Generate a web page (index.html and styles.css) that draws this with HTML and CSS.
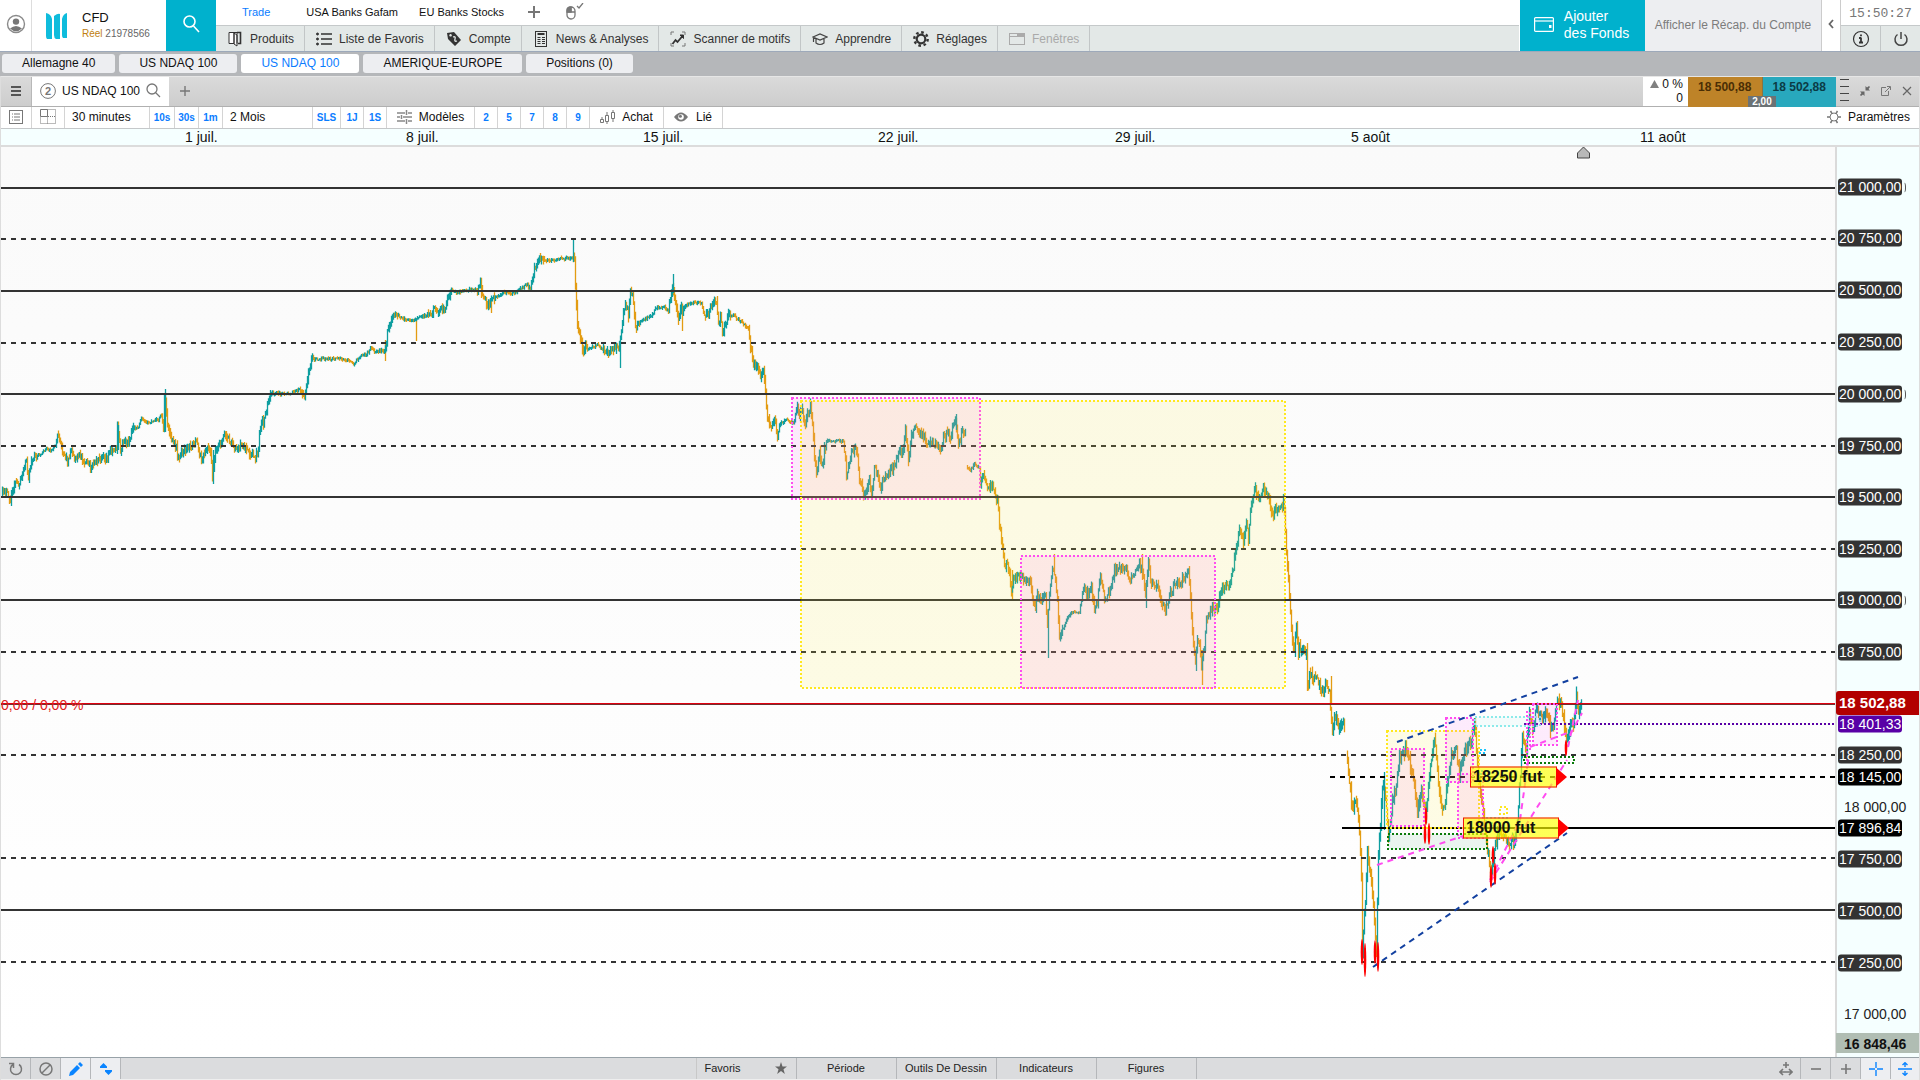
FILE: index.html
```html
<!DOCTYPE html>
<html lang="fr">
<head>
<meta charset="utf-8">
<title>US NDAQ 100</title>
<link rel="stylesheet" href="styles.css">
</head>
<body>
<header class="header">
  <button class="profile" aria-label="Profil"><svg width="20" height="20" viewBox="0 0 20 20"><circle cx="10" cy="10" r="8.5" fill="none" stroke="#8a8a8a" stroke-width="1.4"/><circle cx="10" cy="7.6" r="3.2" fill="#777"/><path d="M4 14.5Q10 9.500 16 14.500Q10 20 4 14.500Z" fill="#777"/></svg></button>
  <div class="brand">
    <svg width="22" height="26" viewBox="0 0 22 26" fill="#0fbcdc"><path d="M0 0q5 1 6 6v20h-5q-1-1-1-3zM8 3q4-3 6-2v25h-4q-2-1-2-4zM16 6q1-5 5-6v25h-4q-1-1-1-3z"/></svg>
    <div><div class="brand-name">CFD</div><div class="account"><span class="gold">Réel</span> 21978566</div></div>
  </div>
  <button class="search" aria-label="Rechercher"><svg width="20" height="20" viewBox="0 0 20 20" fill="none" stroke="#fff" stroke-width="1.600"><circle cx="8.500" cy="7.500" r="5.500"/><path d="M12.500 12L18 18"/></svg></button>
  <div class="nav">
    <nav class="layouts">
      <a href="#" class="on">Trade</a><a href="#">USA Banks Gafam</a><a href="#">EU Banks Stocks</a>
      <button aria-label="Ajouter"><svg width="14" height="14" viewBox="0 0 14 14" stroke="#777" stroke-width="2"><path d="M7 1v12M1 7h12"/></svg></button>
      <button aria-label="Souris"><svg width="18" height="18" viewBox="0 0 18 18" fill="none" stroke="#777" stroke-width="1.300"><rect x="1" y="4" width="8" height="12" rx="4"/><path d="M5 4v5M1 9h8M11 3l2 2 4-5"/><path d="M1 9V7q0-3 4-3v5z" fill="#777"/></svg></button>
    </nav>
    <nav class="menu">
      <button><svg viewBox="0 0 16 16" fill="none" stroke="#333"><path d="M2 1.500h5v11H2zM7 1.500h3v11M7 2l3 2v11l-3-2z" fill="#fff"/><path d="M10 1.500h3.500v11H11" stroke-width="1.600"/></svg>Produits</button>
      <button><svg viewBox="0 0 16 16" fill="#333" stroke="#333"><path d="M5 3h11M5 8h11M5 13h11" stroke-width="1.500"/><circle cx="1.500" cy="3" r="1"/><circle cx="1.500" cy="8" r="1"/><circle cx="1.500" cy="13" r="1"/></svg>Liste de Favoris</button>
      <button><svg viewBox="0 0 16 16" fill="#333"><path fill-rule="evenodd" d="M1 2l7-1 7 8-6 6-7-7zM4.500 3a1.300 1.300 0 1 0 .1 0z"/><path d="M7 6q3-1 2 2t2 2" stroke="#e3e8e7" fill="none" stroke-width="1.300"/></svg>Compte</button>
      <button><svg viewBox="0 0 16 16" fill="none" stroke="#333"><rect x="2.500" y=".5" width="11" height="15"/><path d="M4.500 3h7" stroke-width="2"/><path d="M4.500 6.500h3M4.500 8.500h3M4.500 10.500h3M4.500 12.500h3M9 6.500h3M9 8.500h3M9 10.500h3M9 12.500h3"/></svg>News &amp; Analyses</button>
      <button><svg viewBox="0 0 16 16" fill="none" stroke="#333"><path d="M1 4V1h3M12 1h3v3M15 12v3h-3M4 15H1v-3" stroke="#777"/><path d="M2.500 13l3-4 2 2 5-6" stroke-width="1.800"/><path d="M10 4h3.500v3.500z" fill="#333"/></svg>Scanner de motifs</button>
      <button><svg viewBox="0 0 16 16" fill="none" stroke="#444" stroke-width="1.200"><path d="M1 6l7-3 7 3-7 3zM4 8v4q4 3 8 0V8M1.500 6v5"/></svg>Apprendre</button>
      <button><svg viewBox="0 0 16 16" fill="none" stroke="#333"><circle cx="8" cy="8" r="4.300" stroke-width="2.200"/><circle cx="8" cy="8" r="6.700" stroke-width="2.400" stroke-dasharray="2.600 2.660"/></svg>Réglages</button>
      <button class="off" disabled><svg viewBox="0 0 16 16" fill="none" stroke="#aaa"><rect x=".5" y="2.500" width="15" height="11"/><path d="M1 5.500h14"/><path d="M8 4h7" stroke-width="2"/></svg>Fenêtres</button>
    </nav>
  </div>
  <button class="funds"><svg width="20" height="15" viewBox="0 0 20 15" fill="none" stroke="#fff" stroke-width="1.200"><rect x=".6" y=".6" width="18.800" height="13.800" rx="1"/><path d="M1 4h18"/><path d="M15 9.500h2.500" stroke-width="3"/></svg><span>Ajouter<br>des Fonds</span></button>
  <button class="recap">Afficher le Récap. du Compte</button>
  <button class="fold" aria-label="Replier"><svg width="6" height="10" viewBox="0 0 6 10" fill="none" stroke="#666" stroke-width="1.800"><path d="M5 1L1.500 5 5 9"/></svg></button>
  <div class="system">
    <time>15:50:27</time>
    <div class="system-row">
      <button aria-label="Informations"><svg width="18" height="18" viewBox="0 0 18 18" fill="none" stroke="#333"><circle cx="9" cy="9" r="7.500" stroke-width="1.200"/><path d="M9 7.500v5M7 8h2M7 12.500h4M9 4.500v1.800" stroke-width="1.800"/></svg></button>
      <button aria-label="Quitter"><svg width="16" height="16" viewBox="0 0 16 16" fill="none" stroke="#444" stroke-width="1.500"><path d="M4.500 3.500A6 6 0 1 0 11.500 3.500M8 1v7"/></svg></button>
    </div>
  </div>
</header>
<nav class="desks">
  <button>Allemagne 40</button><button>US NDAQ 100</button><button class="on">US NDAQ 100</button><button>AMERIQUE-EUROPE</button><button>Positions (0)</button>
</nav>
<main class="window">
  <div class="titlebar">
    <button class="burger" aria-label="Menu"><svg width="10" height="12" viewBox="0 0 10 12" stroke="#555" stroke-width="2"><path d="M0 2h10M0 6h10M0 10h10"/></svg></button>
    <div class="doc"><svg width="16" height="16" viewBox="0 0 16 16"><circle cx="8" cy="8" r="7.400" fill="none" stroke="#777"/><text x="8" y="12" text-anchor="middle" class="doc-number">2</text></svg><span>US NDAQ 100</span><svg width="15" height="15" viewBox="0 0 15 15" fill="none" stroke="#777" stroke-width="1.300"><circle cx="6" cy="6" r="5"/><path d="M9.500 9.500L14 14"/></svg></div>
    <button class="newtab" aria-label="Nouvel onglet"><svg width="10" height="10" viewBox="0 0 10 10" stroke="#777" stroke-width="1.400"><path d="M5 0v10M0 5h10"/></svg></button>
    <div class="change"><div><svg width="9" height="8" viewBox="0 0 9 8"><path d="M4.500 0L9 8H0z" fill="#808080"/></svg> 0 %</div><div>0</div></div>
    <div class="quotes"><button class="sell">18 500,88</button><button class="buy">18 502,88</button><span class="spread">2,00</span></div>
    <div class="wintools">
      <svg width="9" height="25" viewBox="0 0 9 25" stroke="#444"><path d="M0 1.500h9M0 8.500h9M0 15.500h9M0 22.500h9"/></svg>
      <button aria-label="Réduire"><svg width="10" height="10" viewBox="0 0 10 10" fill="#666"><path d="M0 5.500h4.500V10L3 8.500 1 10 0 9l1.500-2zM10 4.500H5.500V0L7 1.500 9 0l1 1-1.500 2z"/></svg></button>
      <button aria-label="Détacher"><svg width="10" height="10" viewBox="0 0 10 10" fill="none" stroke="#777"><path d="M5 1.500H.5v8h7V5M4 6l5-5M6 .5h3.500V4"/></svg></button>
      <button aria-label="Fermer"><svg width="10" height="10" viewBox="0 0 10 10" stroke="#666" stroke-width="1.200"><path d="M1 1l8 8M9 1L1 9"/></svg></button>
    </div>
  </div>
  <div class="toolbar">
    <button class="c31" aria-label="Liste"><svg width="14" height="14" viewBox="0 0 14 14" fill="none" stroke="#777"><rect x=".5" y=".5" width="13" height="13"/><path d="M3 4h1M5 4h6M3 7h1M5 7h6M3 10h1M5 10h6"/></svg></button>
    <button class="c33" aria-label="Grille"><svg width="16" height="15" viewBox="0 0 16 15" fill="none" stroke="#777"><path d="M.5.5h7v7h-7z"/><path d="M7.500.5h8v14H.5v-7M7.500 7.500v7M8 7.500h8" stroke-dasharray="1 1"/></svg></button>
    <button class="c85">30 minutes</button>
    <button class="c25 q">10s</button><button class="c24 q">30s</button><button class="c24 q">1m</button>
    <button class="c90">2 Mois</button>
    <button class="c28 q">SLS</button><button class="c23 q">1J</button><button class="c23 q">1S</button>
    <button class="c88"><svg width="15" height="14" viewBox="0 0 15 14" stroke="#888" stroke-width="1.500"><path d="M0 3h8M11 3h4M0 7h3M6 7h9M0 11h8M11 11h4M9.500 0v5M4.500 5v4M9.500 9v5"/></svg>Modèles</button>
    <button class="c23 q">2</button><button class="c23 q">5</button><button class="c23 q">7</button><button class="c23 q">8</button><button class="c23 q">9</button>
    <button class="c74"><svg width="15" height="14" viewBox="0 0 15 14" fill="none" stroke="#777"><path d="M.5 9.500h3v3h-3zM5.500 5.500h3v6h-3zM11.500 2.500h3v6h-3zM2 7v2M7 2v3M7 12v2M13 0v2M13 9v3"/></svg>Achat</button>
    <button class="c59"><svg width="14" height="10" viewBox="0 0 14 10"><path d="M0 5q7-9 14 0-7 9-14 0z" fill="#777"/><circle cx="7" cy="5" r="2.800" fill="#fff"/><circle cx="6.400" cy="4.200" r="1.500" fill="#777"/></svg>Lié</button>
    <button class="params"><svg width="14" height="14" viewBox="0 0 14 14" fill="none" stroke="#777"><circle cx="7" cy="7" r="4"/><path d="M0 7h3M11 7h3M3.500 1l1.500 2.500M10.500 1L9 3.500M3.500 13L5 10.500M10.500 13L9 10.500" stroke-width="1.500"/></svg>Paramètres</button>
  </div>
  <div class="dates" id="dates"></div>
  <div class="chart">
    <div class="plot" id="plot">
      <svg class="canvas" id="canvas" viewBox="1 147 1834 908" preserveAspectRatio="none"></svg>
      <span class="pnl" id="pnl">0,00 / 0,00 %</span>
    </div>
    <div class="axis" id="axis"></div>
  </div>
  <footer class="footer">
    <div class="group">
      <button aria-label="Actualiser"><svg width="14" height="14" viewBox="0 0 14 14" fill="none" stroke="#777" stroke-width="1.500"><path d="M4 2.500a5.500 5.500 0 1 0 6 0M0 1.500h4.500V6"/></svg></button>
      <button aria-label="Effacer"><svg width="14" height="14" viewBox="0 0 14 14" fill="none" stroke="#777" stroke-width="1.500"><circle cx="7" cy="7" r="6"/><path d="M3 11l8-8"/></svg></button>
      <button class="lit" aria-label="Dessiner"><svg width="14" height="14" viewBox="0 0 14 14" fill="#0a84ff"><path d="M0 14l1-4 7-7 3 3-7 7zM9 2l2-2 3 3-2 2z"/></svg></button>
      <button class="lit" aria-label="Trier"><svg width="12" height="12" viewBox="0 0 12 12" fill="#0a84ff"><path d="M3.500 0l3.500 3.500v1.500H0V3.500zM8.500 12L5 8.500V7h7v1.500z"/></svg></button>
    </div>
    <div class="group tabs">
      <button class="fav">Favoris<svg width="12" height="12" viewBox="0 0 12 12"><path d="M6 0l1.500 4.500H12L8.500 7.200 9.800 12 6 9 2.200 12l1.300-4.800L0 4.500h4.500z" fill="#666"/></svg></button><button>Période</button><button>Outils De Dessin</button><button>Indicateurs</button><button>Figures</button>
    </div>
    <div class="group right">
      <button aria-label="Ajuster"><svg width="14" height="14" viewBox="0 0 14 14" fill="none" stroke="#777" stroke-width="1.600"><path d="M7 0v6M4 3h6M1 10h12M4 7l-3 3 3 3M10 7l3 3-3 3"/></svg></button>
      <button aria-label="Zoom arrière"><svg width="10" height="10" viewBox="0 0 10 10" stroke="#777" stroke-width="1.600"><path d="M0 5h10"/></svg></button>
      <button aria-label="Zoom avant"><svg width="10" height="10" viewBox="0 0 10 10" stroke="#777" stroke-width="1.600"><path d="M0 5h10M5 0v10"/></svg></button>
      <button class="lit" aria-label="Réticule"><svg width="14" height="14" viewBox="0 0 14 14" stroke="#0a84ff" stroke-width="1.400"><path d="M0 7h6M8 7h6M7 0v6M7 8v6"/></svg></button>
      <button class="lit" aria-label="Axe"><svg width="14" height="14" viewBox="0 0 14 14" fill="none" stroke="#0a84ff" stroke-width="1.400"><path d="M0 7h14M7 0v5M7 9v5M4.500 3L7 .7 9.500 3M4.500 11L7 13.300 9.500 11"/></svg></button>
    </div>
  </footer>
</main>
<script src="chart.js"></script>
</body>
</html>
```
FILE: styles.css
```css
* { box-sizing: border-box; }
body { margin: 0; min-height: 100vh; display: flex; flex-direction: column; background: #fff; font: 12px/14px "Liberation Sans", Arial, sans-serif; color: #111; }
button { font: inherit; color: inherit; border: 0; background: none; padding: 0; margin: 0; display: flex; align-items: center; justify-content: center; white-space: nowrap; }
a { color: inherit; text-decoration: none; }
svg { flex: none; }

.header { height: 52px; display: flex; border-bottom: 1px solid #9da9ba; background: #fff; flex: none; }
.profile { width: 32px; border-right: 1px solid #ddd; padding-bottom: 4px; }
.brand { width: 134px; display: flex; gap: 14px; padding-left: 14px; align-items: center; }
.brand-name { font-size: 13px; line-height: 16px; }
.account { font-size: 10px; line-height: 16px; color: #666; white-space: nowrap; }
.gold { color: #c08010; }
.search { width: 50px; background: #00b1cd; padding-bottom: 4px; }
.nav { flex: 1; display: flex; flex-direction: column; }
.layouts { height: 25px; display: flex; align-items: center; padding: 0 0 2px 26px; font-size: 11px; }
.layouts a { margin-right: 21px; }
.layouts .on { color: #0a7cff; margin-right: 36px; }
.layouts button { margin: 0 23px 0 2px; }
.menu { flex: 1; display: flex; background: #e3e8e7; border-top: 1px solid #c5c9ca; color: #333; }
.menu button { gap: 7px; padding: 0 10px 0 11px; border-right: 1px solid #c2c6c7; }
.menu svg { width: 16px; height: 16px; }
.menu .off { color: #aaa; }
.funds { width: 126px; gap: 10px; padding: 0 2px 2px 0; background: #00b1cd; color: #fff; font-size: 14px; line-height: 17px; text-align: left; border-left: 1px solid #fff; }
.recap { width: 177px; background: #edeef1; color: #7c7c7c; border-right: 1px solid #ccc; padding-bottom: 1px; }
.fold { width: 19px; border-right: 1px solid #ccc; padding-bottom: 4px; }
.system { width: 79px; display: flex; flex-direction: column; }
.system time { height: 25px; font: 13px/27px "Liberation Mono", monospace; color: #777; text-align: center; }
.system-row { flex: 1; display: flex; border-top: 1px solid #c5c9ca; background: #e3e8e7; }
.system-row button { flex: 1; }
.system-row button + button { border-left: 1px solid #c2c6c7; }

.desks { height: 24px; flex: none; display: flex; gap: 4px; padding: 2px 2px 3px; background: #b5b7ba; }
.desks button { padding: 0 20px 2px; border-radius: 3px; background: #edeef1; }
.desks .on { background: #fff; color: #0a7cff; }

.window { flex: 1; display: flex; flex-direction: column; border-left: 1px solid #ddd; border-right: 1px solid #ddd; }
.titlebar { height: 31px; flex: none; display: flex; border-top: 1px solid #e6e6e6; border-bottom: 1px solid #b0b0b0; background: linear-gradient(#dadada, #cdcdcd); }
.burger { width: 31px; padding-bottom: 2px; border-right: 1px solid #b8b8b8; }
.doc { width: 137px; display: flex; align-items: center; gap: 6px; padding: 0 0 2px 8px; background: #fff; white-space: nowrap; }
.doc-number { font: bold 11px "Liberation Sans", sans-serif; fill: #777; }
.newtab { width: 32px; margin-right: auto; padding-bottom: 2px; }
.change { width: 45px; padding: 0 5px 0 0; background: #fff; text-align: right; }
.quotes { width: 148px; display: flex; position: relative; font-weight: bold; margin-bottom: -1px; }
.quotes button { flex: 1; padding-bottom: 11px; }
.sell { background: #be8328; color: #4a2e05; }
.buy { background: #28a8bd; color: #0b3b45; border-left: 1px solid #8a7340; }
.spread { position: absolute; left: 60px; bottom: 0; width: 28px; height: 11px; background: #6b7275; color: #fff; font-size: 10px; line-height: 11px; text-align: center; }
.wintools { width: 83px; display: flex; align-items: center; justify-content: space-between; padding: 0 7px 2px 4px; }

.toolbar { height: 22px; flex: none; display: flex; border-bottom: 1px solid #c5c8ca; background: #fff; }
.toolbar button { border-right: 1px solid #d4d4d4; padding-bottom: 2px; }
.toolbar .q { font-size: 10px; font-weight: bold; color: #0a7cff; padding-bottom: 0; }
.c23 { width: 23px; } .c24 { width: 24px; } .c25 { width: 25px; } .c28 { width: 28px; } .c31 { width: 31px; } .c33 { width: 33px; }
.c59 { width: 59px; gap: 8px; } .c74 { width: 74px; gap: 7px; } .c88 { width: 88px; gap: 7px; }
.toolbar .c85, .toolbar .c90 { justify-content: flex-start; padding-left: 7px; }
.c85 { width: 85px; } .c90 { width: 90px; }
.toolbar .params { margin-left: auto; border: 0; gap: 7px; padding-right: 9px; }

.dates { height: 18px; flex: none; position: relative; border-bottom: 2px solid #dcdcdc; background: #f5ffff; font-size: 14px; line-height: 17px; }
.dates span { position: absolute; white-space: nowrap; }
.chart { flex: 1; display: flex; min-height: 400px; }
.plot { flex: 1; position: relative; margin-bottom: 2px; background: linear-gradient(#fafafa, #fff); }
.canvas { position: absolute; inset: 0; width: 100%; height: 100%; }
.pnl { position: absolute; left: 0; transform: translateY(-50%); font-size: 14px; color: #e02020; }
.tag { position: absolute; display: flex; align-items: center; height: 21px; padding-left: 2px; transform: translateY(-50%); border: 1px solid #e11; background: rgba(255, 255, 0, .66); font-size: 16px; font-weight: bold; }
.tag svg { position: absolute; left: 100%; top: 0; }
.axis { width: 84px; position: relative; border-left: 2px solid #dadada; background: #f5ffff; font-size: 14px; }
.axis span { position: absolute; transform: translateY(-50%); white-space: nowrap; }
.axis .plain { left: 7px; color: #222; }
.axis .level { left: 1px; height: 17px; line-height: 17px; padding: 0 1px; border-radius: 3px; background: #333; color: #fff; }
.axis .thousand::after { content: ""; position: absolute; left: 100%; top: 4px; width: 3px; height: 10px; border-right: 1px solid #555; border-radius: 50%; }
.axis .drawn { background: #000; }
.axis .violet { background: #5800a6; }
.axis .last { left: -1px; right: 0; height: 24px; padding-left: 3px; border-radius: 3px 0 0 3px; background: #b20000; color: #fff; font-size: 15px; font-weight: bold; line-height: 24px; }
.axis .floor { left: -1px; right: 0; height: 20px; padding-left: 8px; background: #b0bdb3; font-weight: bold; line-height: 22px; }

.footer { height: 23px; flex: none; display: grid; grid-template-columns: 1fr auto 1fr; border-top: 1px solid #98a2a8; border-bottom: 1px solid #eee; background: #dbdcde; font-size: 11px; color: #222; }
.group { display: flex; }
.group button { width: 30px; border-right: 1px solid #b5b7ba; }
.group .lit { background: #edeef1; }
.group.right { justify-content: flex-end; }
.right button:last-child { width: 28px; border: 0; }
.tabs { margin-right: 28px; border-left: 1px solid #c8c8c8; }
.group.tabs button { width: 100px; padding-bottom: 2px; }
.group.tabs .fav { justify-content: space-between; padding: 0 9px 2px 8px; }
```
FILE: chart.js
```js
const X0 = 1, W = 1834, Y0 = 147, H = 908, END = 1836;
const NS = 'http://www.w3.org/2000/svg';
const canvas = document.getElementById('canvas');

function el(name, attrs) {
  const e = document.createElementNS(NS, name);
  for (const k in attrs) e.setAttribute(k, attrs[k]);
  canvas.appendChild(e);
}
function line(x1, y1, x2, y2, color, width, dash) {
  el('path', { d: `M${x1} ${y1}L${x2} ${y2}`, stroke: color, 'stroke-width': width, 'stroke-dasharray': dash || 'none' });
}
function box(x1, y1, x2, y2, color, fill) {
  el('rect', { x: x1, y: y1, width: x2 - x1, height: y2 - y1, stroke: color, 'stroke-width': 2, 'stroke-dasharray': '2 2', fill: fill || 'none' });
}
function label(parent, cls, text, x, y) {
  const s = document.createElement('span');
  s.className = cls;
  s.textContent = text;
  if (x !== null) s.style.left = ((x - X0) / W * 100) + '%';
  s.style.top = ((y - Y0) / H * 100) + '%';
  parent.appendChild(s);
  return s;
}

// Price track: x, y pairs; "|" starts a new session after a gap
const track = `2,492 5,489 11,501 15,483 20,486 27,460 29,477 33,457 37,456 42,454 47,448 51,451 56,445 58,436 62,447 68,461 72,450 75,458 82,455 84,460 91,467 98,460 104,455 107,458 112,450 117,448 118,428 121,450 124,440 128,443 133,430 139,427 142,417 148,423 153,422 159,419 162,415 164,432 165,393 168,423 171,438 177,447 178,457 182,454 188,447 197,442 202,460 208,448 211,450 213,477 216,450 219,442 222,443 224,434 232,443 237,450 243,443 248,453 256,457 259,448 260,430 263,418 264,427 268,403 271,393 286,394 295,392 300,389 305,397 307,387 310,368 312,358 315,359 345,359 354,364 361,357 369,353 371,348 375,352 382,350 385,353 388,333 392,317 395,316 398,314 402,319 415,320 426,315 433,312 437,310 441,308 445,310 447,302 452,290 457,292 465,291 473,289 477,291 481,285 484,298 489,306 494,298 504,293 514,293 522,288 528,284 531,290 535,267 541,258 549,261 557,259 573,258 575,260 576,290 578,323 581,340 584,353 586,343 589,348 598,345 606,353 612,350 620,347 622,330 624,310 626,302 629,315 631,293 633,293 636,327 638,325 642,320 651,317 657,308 665,307 669,312 672,293 673,285 676,302 679,318 682,308 687,305 695,302 702,304 706,318 711,308 717,302 719,323 721,318 723,333 726,327 730,313 736,317 742,322 749,329 751,347 754,367 758,363 761,377 764,373 766,390 767,410 771,427 775,423 778,433 781,423 787,420 792,423 795,422 798,403 800,417 802,408 806,423 811,405 813,420 815,457 817,475 820,453 823,467 825,448 828,441 844,441 847,473 853,452 857,447 860,477 864,493 867,492 870,483 872,493 875,467 881,485 887,475 893,470 900,453 904,448 906,430 908,447 909,463 912,437 915,427 922,433 928,442 936,443 941,452 944,437 949,432 951,443 953,427 956,417 959,443 963,433 966,435 | 967,467 971,470 975,464 980,468 981,483 984,478 989,488 993,486 997,500 999,507 1000,527 1003,547 1006,567 1008,560 1012,590 1015,577 1021,575 1024,582 1031,580 1033,597 1036,607 1038,595 1042,602 1046,593 1048,627 1050,593 1053,567 1056,580 1058,600 1060,640 1063,630 1067,620 1071,613 1076,612 1080,612 1084,588 1089,593 1092,587 1095,613 1098,603 1101,573 1105,600 1110,593 1115,570 1127,568 1130,582 1135,573 1140,563 1143,573 1146,593 1149,563 1152,583 1158,587 1162,602 1166,608 1171,593 1176,583 1181,582 1189,572 1191,597 1193,633 1196,663 1198,637 1200,640 1202,670 1205,643 1207,620 1213,610 1218,608 1221,590 1226,587 1231,582 1234,567 1237,547 1240,532 1244,543 1247,520 1249,540 1251,510 1256,490 1260,498 1264,488 1269,497 1273,517 1278,507 1282,507 1284,503 1286,530 1289,580 1292,633 1295,647 1297,623 1299,650 1303,647 1307,653 1308,683 1312,672 1315,678 1320,683 1323,692 1327,683 1330,693 1333,733 1335,720 1337,713 1339,732 1343,720 1345,723 | 1347,757 1350,783 1353,807 1357,803 1360,830 1362,880 1363,950 1366,903 1368,853 1372,880 1374,907 1377,950 1379,853 1382,807 1384,780 1386,797 1389,840 1393,800 1397,783 1400,757 1406,750 1412,767 1415,787 1418,813 1422,787 1426,817 1428,800 1431,767 1435,737 1438,770 1442,810 1445,807 1448,780 1452,753 1457,750 1460,773 1465,753 1472,740 1475,720 1478,763 1481,793 1484,813 1488,850 1492,870 1497,840 1500,827 1505,837 1510,845 1515,840 1518,820 1521,773 1523,740 1527,750 1530,717 1533,730 1537,710 1542,718 1547,708 1551,730 1555,720 1558,698 1563,712 1567,740 1572,717 1574,727 1577,697 1579,710 1582,702`;

// Calm overnight stretches have short candles: from, to
const calm = [[271, 300], [313, 383], [398, 427], [452, 476], [495, 527], [545, 572], [588, 602], [640, 668], [684, 704], [731, 748], [780, 796], [828, 844], [37, 55], [135, 160], [967, 980], [1063, 1082]];
// Long wicks: x, top, bottom, direction
const wicks = [[11, 490, 506, 1], [165, 389, 432, 1], [118, 425, 450, 1], [213, 450, 484, 1], [416, 318, 341, 0], [385, 340, 361, 0], [573, 239, 262, 1], [491, 298, 313, 0], [481, 282, 298, 0], [620, 341, 368, 1], [673, 274, 293, 1], [682, 305, 331, 0], [717, 296, 315, 0], [1048, 617, 658, 1], [1054, 554, 575, 0], [1202, 650, 685, 0], [1196, 650, 671, 1], [1142, 554, 580, 0], [1146, 580, 608, 1], [1307, 650, 691, 0], [1331, 676, 705, 0], [1012, 570, 599, 0], [956, 414, 430, 1], [1384, 772, 830, 1], [1550, 715, 738, 0]];

let seed = 17;
const rnd = () => (seed = (seed * 16807) % 2147483647) / 2147483647;
const paths = ['', ''];
for (const session of track.split('|')) {
  const pts = session.trim().split(/\s+/).map(p => p.split(',').map(Number));
  let prev = pts[0][1];
  for (let i = 0; i < pts.length - 1; i++) {
    const [xa, ya] = pts[i], [xb, yb] = pts[i + 1];
    for (let x = xa; x < xb; x++) {
      const quiet = calm.some(c => x >= c[0] && x <= c[1]);
      const amp = quiet ? 2.4 : x < 560 ? 6 : x > 1280 ? 9 : 7;
      const y = ya + (yb - ya) * (x + 1 - xa) / (xb - xa) + (rnd() - .5) * amp;
      const top = Math.min(prev, y) - .5 - rnd() * amp * .7;
      const bottom = Math.max(prev, y) + .5 + rnd() * amp * .7;
      paths[y < prev ? 1 : 0] += `M${x + .5} ${top.toFixed(1)}V${bottom.toFixed(1)}`;
      prev = y;
    }
  }
}
for (const [x, a, b, up] of wicks) paths[up] += `M${x + .5} ${a}V${b}`;

// Candles, then horizontal levels
const solid = [188, 291, 394, 497, 600, 910], dashed = [239, 343, 446, 549, 652, 755, 858, 962];
el('path', { d: paths[0], stroke: '#e39c12', 'stroke-width': 1.3 });
el('path', { d: paths[1], stroke: '#0e9ea0', 'stroke-width': 1.3 });
for (const y of solid) line(0, y, END, y, '#333', 2);
for (const y of dashed) line(1, y, END, y, '#333', 2, '5 5');
line(0, 703.5, END, 703.5, '#e00010', 1);
line(0, 704.5, END, 704.5, '#703030', 1);
line(1330, 777, END, 777, '#000', 2, '5 5');
line(1342, 828, 1384, 828, '#000', 2);
line(1384, 828, 1463, 828, '#000', 2, '2 2');
line(1463, 828, END, 828, '#000', 2);
line(1524, 724, END, 724, '#5800a6', 2, '2 2');

// Range boxes
const pink = '#ff4cf0', pinkFill = 'rgba(255,60,240,.09)', yellow = '#ffe81f', yellowFill = 'rgba(255,238,60,.13)';
box(792, 398, 980, 499, pink, pinkFill);
box(801, 401, 1285, 688, yellow, yellowFill);
box(1021, 556, 1215, 688, pink, pinkFill);
box(1387, 731, 1479, 828, yellow, yellowFill);
box(1391, 749, 1424, 826, pink, pinkFill);
box(1446, 718, 1473, 782, pink, pinkFill);
box(1458, 774, 1483, 838, pink, pinkFill);
box(1388, 834, 1487, 849, '#0a7a0a', 'rgba(0,128,60,.08)');
box(1475, 717, 1540, 726, '#8ceaea', 'rgba(140,234,234,.08)');
box(1533, 704, 1557, 745, pink, pinkFill);
line(1527, 711, 1527, 772, pink, 2, '2 2');
line(1530, 712, 1530, 750, pink, 2, '2 2');
box(1524, 757, 1574, 763, '#0a7a0a');
box(1480, 750, 1485, 753, '#19c5ff');
box(1481, 771, 1486, 774, '#19c5ff');
box(1500, 807, 1507, 814, yellow);
box(1486, 818, 1507, 823, '#5fe0ee');

// Trend lines
line(1397, 742, 1578, 677, '#1240a0', 2, '6 5');
line(1373, 967, 1567, 833, '#1240a0', 2, '6 5');
line(1377, 865, 1463, 836, pink, 2, '6 5');
line(1490, 882, 1567, 760, pink, 2, '6 5');
line(1490, 880, 1520, 820, pink, 2, '6 5');
line(1520, 820, 1529, 755, pink, 2, '6 5');
line(1530, 747, 1567, 733, pink, 2, '6 5');
line(1568, 747, 1578, 700, pink, 2, '6 5');
line(1570, 735, 1582, 713, pink, 2, '6 5');

// Alert marks on the lows
for (const [x, y, r] of [[1362, 952, 13], [1365, 960, 17], [1375, 952, 12], [1378, 957, 15], [1426, 816, 9], [1425, 834, 10], [1429, 834, 11], [1493, 855, 9], [1491, 877, 11], [1495, 874, 11], [1566, 748, 8]])
  el('ellipse', { cx: x, cy: y, rx: 1.3, ry: r, fill: '#f00' });

el('path', { d: 'M1583.5 147l6 6v5h-12v-5z', fill: '#b8b8b8', stroke: '#444' });

const plot = document.getElementById('plot');
for (const [text, x, y, w] of [['18250 fut', 1470, 776.5, 87], ['18000 fut', 1463, 827.5, 96]]) {
  const t = label(plot, 'tag', text, x, y);
  t.style.width = w + 'px';
  t.insertAdjacentHTML('beforeend', '<svg width="11" height="19" viewBox="0 0 11 19"><path d="M0 0L11 9.500 0 19z" fill="#f00"/></svg>');
}
document.getElementById('pnl').style.top = ((705 - Y0) / H * 100) + '%';

const axis = document.getElementById('axis');
for (const [t, y] of [['18 000,00', 806], ['17 000,00', 1012]]) label(axis, 'plain', t, null, y);
for (const [t, y] of [['21 000,00', 187], ['20 750,00', 238], ['20 500,00', 290], ['20 250,00', 342], ['20 000,00', 393], ['19 750,00', 445], ['19 500,00', 496], ['19 250,00', 548], ['19 000,00', 599], ['18 750,00', 651], ['18 250,00', 754], ['17 750,00', 857], ['17 500,00', 909], ['17 250,00', 961]])
  label(axis, t.endsWith(' 000,00') ? 'level thousand' : 'level', t, null, y);
label(axis, 'level drawn', '18 145,00', null, 776);
label(axis, 'level drawn', '17 896,84', null, 827);
label(axis, 'level violet', '18 401,33', null, 723);
label(axis, 'last', '18 502,88', null, 702);
label(axis, 'floor', '16 848,46', null, 1041);

const dates = document.getElementById('dates');
for (const [t, x] of [['1 juil.', 184], ['8 juil.', 405], ['15 juil.', 642], ['22 juil.', 877], ['29 juil.', 1114], ['5 août', 1350], ['11 août', 1639]]) {
  const s = document.createElement('span');
  s.textContent = t;
  s.style.left = (x / 1918 * 100) + '%';
  dates.appendChild(s);
}
```
